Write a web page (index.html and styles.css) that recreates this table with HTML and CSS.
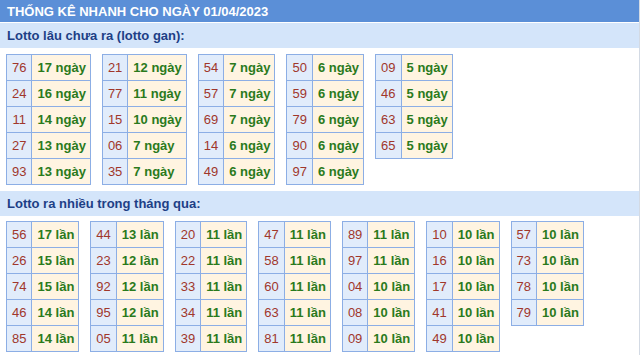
FILE: index.html
```html
<!DOCTYPE html>
<html lang="vi">
<head>
<meta charset="utf-8">
<title>Thống kê nhanh</title>
<link rel="stylesheet" href="styles.css">
</head>
<body>
<div class="box">
  <div class="title">THỐNG KÊ NHANH CHO NGÀY 01/04/2023</div>
  <div class="sub">Lotto lâu chưa ra (lotto gan):</div>
  <div class="tables first">
    <table><tr><td class="n">76</td><td class="v">17 ngày</td></tr><tr><td class="n">24</td><td class="v">16 ngày</td></tr><tr><td class="n">11</td><td class="v">14 ngày</td></tr><tr><td class="n">27</td><td class="v">13 ngày</td></tr><tr><td class="n">93</td><td class="v">13 ngày</td></tr></table>
    <table><tr><td class="n">21</td><td class="v">12 ngày</td></tr><tr><td class="n">77</td><td class="v">11 ngày</td></tr><tr><td class="n">15</td><td class="v">10 ngày</td></tr><tr><td class="n">06</td><td class="v">7 ngày</td></tr><tr><td class="n">35</td><td class="v">7 ngày</td></tr></table>
    <table><tr><td class="n">54</td><td class="v">7 ngày</td></tr><tr><td class="n">57</td><td class="v">7 ngày</td></tr><tr><td class="n">69</td><td class="v">7 ngày</td></tr><tr><td class="n">14</td><td class="v">6 ngày</td></tr><tr><td class="n">49</td><td class="v">6 ngày</td></tr></table>
    <table><tr><td class="n">50</td><td class="v">6 ngày</td></tr><tr><td class="n">59</td><td class="v">6 ngày</td></tr><tr><td class="n">79</td><td class="v">6 ngày</td></tr><tr><td class="n">90</td><td class="v">6 ngày</td></tr><tr><td class="n">97</td><td class="v">6 ngày</td></tr></table>
    <table><tr><td class="n">09</td><td class="v">5 ngày</td></tr><tr><td class="n">46</td><td class="v">5 ngày</td></tr><tr><td class="n">63</td><td class="v">5 ngày</td></tr><tr><td class="n">65</td><td class="v">5 ngày</td></tr></table>
  </div>
  <div class="sub">Lotto ra nhiều trong tháng qua:</div>
  <div class="tables second">
    <table><tr><td class="n">56</td><td class="v">17 lần</td></tr><tr><td class="n">26</td><td class="v">15 lần</td></tr><tr><td class="n">74</td><td class="v">15 lần</td></tr><tr><td class="n">46</td><td class="v">14 lần</td></tr><tr><td class="n">85</td><td class="v">14 lần</td></tr></table>
    <table><tr><td class="n">44</td><td class="v">13 lần</td></tr><tr><td class="n">23</td><td class="v">12 lần</td></tr><tr><td class="n">92</td><td class="v">12 lần</td></tr><tr><td class="n">95</td><td class="v">12 lần</td></tr><tr><td class="n">05</td><td class="v">11 lần</td></tr></table>
    <table><tr><td class="n">20</td><td class="v">11 lần</td></tr><tr><td class="n">22</td><td class="v">11 lần</td></tr><tr><td class="n">33</td><td class="v">11 lần</td></tr><tr><td class="n">34</td><td class="v">11 lần</td></tr><tr><td class="n">39</td><td class="v">11 lần</td></tr></table>
    <table><tr><td class="n">47</td><td class="v">11 lần</td></tr><tr><td class="n">58</td><td class="v">11 lần</td></tr><tr><td class="n">60</td><td class="v">11 lần</td></tr><tr><td class="n">63</td><td class="v">11 lần</td></tr><tr><td class="n">81</td><td class="v">11 lần</td></tr></table>
    <table><tr><td class="n">89</td><td class="v">11 lần</td></tr><tr><td class="n">97</td><td class="v">11 lần</td></tr><tr><td class="n">04</td><td class="v">10 lần</td></tr><tr><td class="n">08</td><td class="v">10 lần</td></tr><tr><td class="n">09</td><td class="v">10 lần</td></tr></table>
    <table><tr><td class="n">10</td><td class="v">10 lần</td></tr><tr><td class="n">16</td><td class="v">10 lần</td></tr><tr><td class="n">17</td><td class="v">10 lần</td></tr><tr><td class="n">41</td><td class="v">10 lần</td></tr><tr><td class="n">49</td><td class="v">10 lần</td></tr></table>
    <table><tr><td class="n">57</td><td class="v">10 lần</td></tr><tr><td class="n">73</td><td class="v">10 lần</td></tr><tr><td class="n">78</td><td class="v">10 lần</td></tr><tr><td class="n">79</td><td class="v">10 lần</td></tr></table>
  </div>
</div>
</body>
</html>
```

FILE: styles.css
```css
html, body {
  margin: 0;
  padding: 0;
  background: #ffffff;
}
.box {
  width: 639px;
  height: 355px;
  border-right: 1px solid #d3dae4;
  font-family: "Liberation Sans", Arial, sans-serif;
  overflow: hidden;
}
.title {
  height: 22px;
  line-height: 23px;
  padding-left: 7px;
  background: #5b8fd7;
  color: #ffffff;
  font-size: 13px;
  font-weight: bold;
  border-bottom: 1px solid #ffffff;
}
.sub {
  height: 25px;
  line-height: 25px;
  padding-left: 7px;
  background: #d4e5fa;
  color: #1d3f86;
  font-size: 13px;
  font-weight: bold;
}
.tables {
  display: flex;
  align-items: flex-start;
  gap: 11px;
  padding: 6px;
}
.tables.second {
  padding-top: 5px;
}
table {
  border-collapse: collapse;
  font-size: 13px;
}
td {
  border: 1px solid #8caee5;
  height: 26px;
  padding: 0 5px;
  line-height: 25px;
  box-sizing: border-box;
  white-space: nowrap;
}
td.n {
  background: #e1ecfb;
  color: #a0372b;
  text-align: center;
}
td.v {
  background: #fff4e1;
  color: #2a7a1c;
  font-weight: bold;
  padding: 0 4px 0 5px;
}
```
